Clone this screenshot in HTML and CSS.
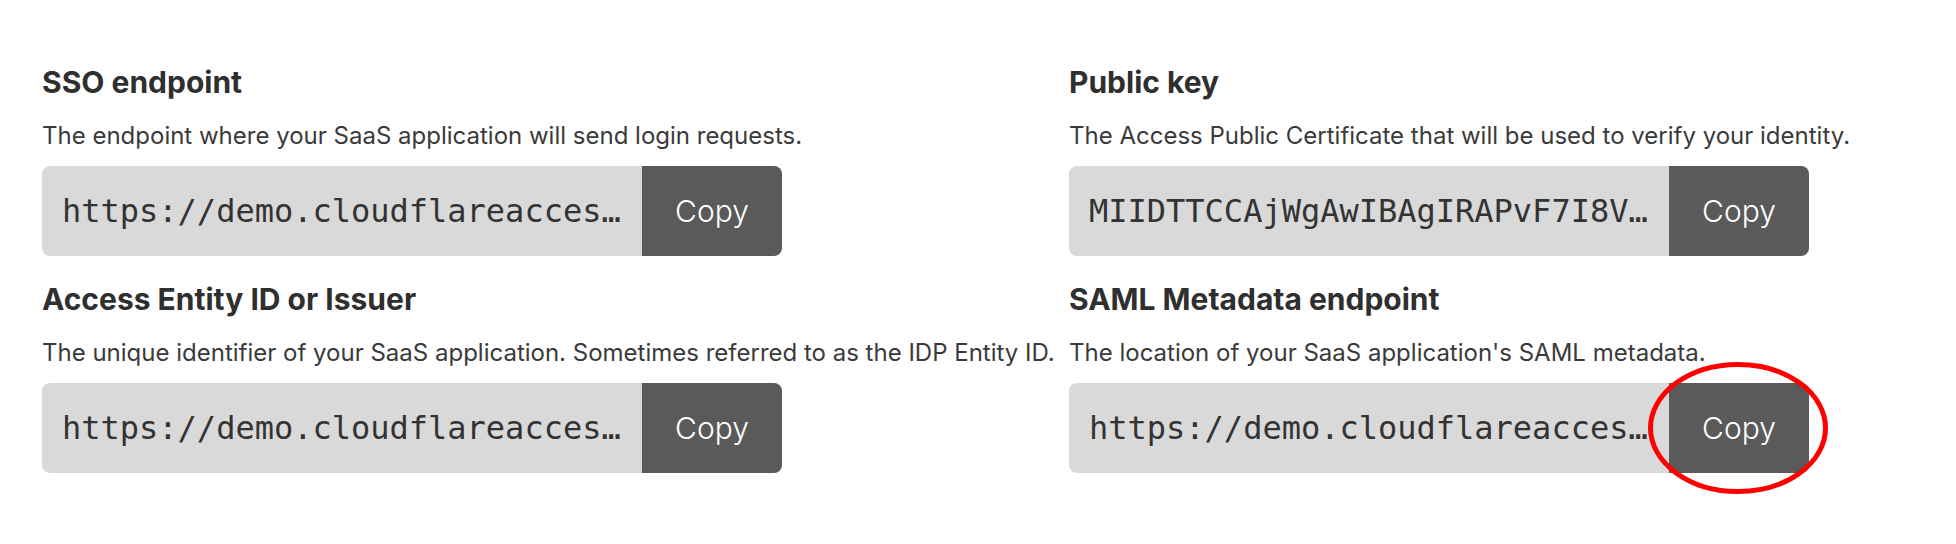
FILE: index.html
```html
<!DOCTYPE html>
<html lang="en">
<head>
<meta charset="utf-8">
<title>SaaS application endpoints</title>
<link rel="stylesheet" href="styles.css">
</head>
<body>
<main class="fields">
  <section class="field">
    <h2 class="field-title">SSO endpoint</h2>
    <p class="field-desc">The endpoint where your SaaS application will send login requests.</p>
    <div class="copy-box">
      <span class="copy-value">https://demo.cloudflareaccess.com/cdn-cgi/access/sso/saml/6b2e0f1c9a3d4e5f8a7b</span>
      <button class="copy-btn" type="button">Copy</button>
    </div>
  </section>
  <section class="field">
    <h2 class="field-title">Public key</h2>
    <p class="field-desc">The Access Public Certificate that will be used to verify your identity.</p>
    <div class="copy-box">
      <span class="copy-value">MIIDTTCCAjWgAwIBAgIRAPvF7I8VqLmN2oPQrStUvWx</span>
      <button class="copy-btn" type="button">Copy</button>
    </div>
  </section>
  <section class="field">
    <h2 class="field-title">Access Entity ID or Issuer</h2>
    <p class="field-desc">The unique identifier of your SaaS application. Sometimes referred to as the IDP Entity ID.</p>
    <div class="copy-box">
      <span class="copy-value">https://demo.cloudflareaccess.com/6b2e0f1c9a3d4e5f8a7b</span>
      <button class="copy-btn" type="button">Copy</button>
    </div>
  </section>
  <section class="field">
    <h2 class="field-title">SAML Metadata endpoint</h2>
    <p class="field-desc">The location of your SaaS application's SAML metadata.</p>
    <div class="copy-box">
      <span class="copy-value">https://demo.cloudflareaccess.com/cdn-cgi/access/sso/saml/6b2e0f1c9a3d4e5f8a7b/saml-metadata</span>
      <button class="copy-btn" type="button">Copy</button>
      <svg class="highlight-ring" viewBox="0 0 180 132" width="180" height="132" aria-hidden="true">
        <ellipse cx="90" cy="66" rx="87.5" ry="63.5" fill="none" stroke="#ff0000" stroke-width="5"/>
      </svg>
    </div>
  </section>
</main>
</body>
</html>
```

FILE: styles.css
```css
* {
  box-sizing: border-box;
}

html, body {
  margin: 0;
  padding: 0;
  background: #ffffff;
}

body {
  font-family: Inter, "Noto Sans", "Liberation Sans", sans-serif;
  color: #333333;
  min-height: 544px;
}

.fields {
  display: grid;
  grid-template-columns: 1027px auto;
  row-gap: 25px;
  padding: 64px 0 71px 42px;
}

.field {
  display: flex;
  flex-direction: column;
}

.field-title {
  margin: 0;
  font-size: 30px;
  line-height: 36px;
  font-weight: 700;
  letter-spacing: 0;
  color: #2f2f2f;
}

.field-desc {
  margin: 21px 0 0;
  font-size: 24px;
  line-height: 30px;
  font-weight: 400;
  color: #3a3a3a;
}

.copy-box {
  position: relative;
  display: flex;
  align-items: stretch;
  width: 740px;
  height: 90px;
  margin-top: 15px;
  background: #d9d9d9;
  border-radius: 8px;
}

.copy-value {
  flex: 1;
  min-width: 0;
  align-self: center;
  padding: 0 16px 0 20px;
  font-family: "DejaVu Sans Mono", "Liberation Mono", monospace;
  font-size: 32px;
  line-height: 40px;
  color: #333333;
  white-space: nowrap;
  overflow: hidden;
  text-overflow: ellipsis;
}

.copy-btn {
  flex: 0 0 140px;
  border: 0;
  margin: 0;
  padding: 0;
  background: #5a5a5a;
  color: #ffffff;
  font-family: Inter, "Noto Sans", "Liberation Sans", sans-serif;
  font-size: 30px;
  font-weight: 300;
  border-radius: 0 8px 8px 0;
  cursor: pointer;
}

.highlight-ring {
  position: absolute;
  z-index: 2;
  left: 579px;
  top: -21px;
  overflow: visible;
  pointer-events: none;
}
```
